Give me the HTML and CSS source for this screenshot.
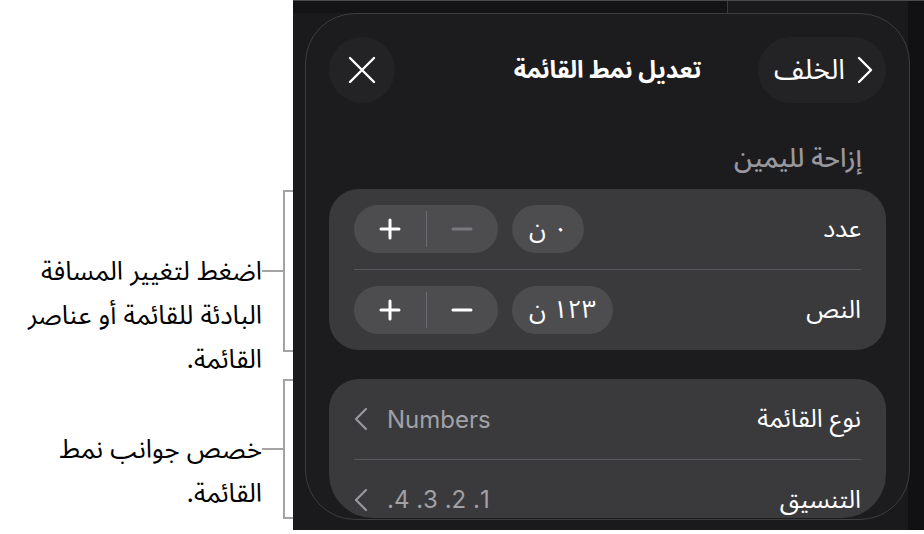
FILE: index.html
```html
<!DOCTYPE html>
<html lang="ar">
<head>
    <meta charset="UTF-8">
    <meta name="viewport" content="width=device-width, initial-scale=1.0">
    <title>تعديل نمط القائمة</title>
    <link rel="stylesheet" href="styles.css">
</head>
<body>
    <div class="page">
        <div class="notes">
            <div class="note note-indent">
                <p class="note-text" dir="rtl">اضغط لتغيير المسافة<br>البادئة للقائمة أو عناصر<br>القائمة.</p>
                <span class="note-lead"></span>
                <span class="bracket"></span>
            </div>
            <div class="note note-style">
                <p class="note-text" dir="rtl">خصص جوانب نمط<br>القائمة.</p>
                <span class="note-lead"></span>
                <span class="bracket"></span>
            </div>
        </div>

        <div class="screen">
            <div class="popover" dir="rtl">
                <div class="header">
                    <button class="back">
                        <svg width="16" height="28" viewBox="0 0 16 28"><polyline points="2,2 14,14 2,26" fill="none" stroke="#fff" stroke-width="2.4" stroke-linecap="round" stroke-linejoin="round"/></svg>
                        <span>الخلف</span>
                    </button>
                    <h1 class="title">تعديل نمط القائمة</h1>
                    <button class="close">
                        <svg width="28" height="28" viewBox="0 0 28 28"><path d="M2,2 L26,26 M26,2 L2,26" stroke="#fff" stroke-width="2.4" stroke-linecap="round"/></svg>
                    </button>
                </div>

                <h2 class="section-title">إزاحة لليمين</h2>
                <div class="group">
                    <div class="row">
                        <span class="row-label">عدد</span>
                        <div class="controls">
                            <span class="value">٠ ن</span>
                            <div class="stepper">
                                <button class="step is-disabled">
                                    <svg width="22" height="22" viewBox="0 0 22 22"><path d="M2,11 H20" stroke="currentColor" stroke-width="3" stroke-linecap="round"/></svg>
                                </button>
                                <span class="step-sep"></span>
                                <button class="step">
                                    <svg width="22" height="22" viewBox="0 0 22 22"><path d="M2,11 H20 M11,2 V20" stroke="currentColor" stroke-width="3" stroke-linecap="round"/></svg>
                                </button>
                            </div>
                        </div>
                    </div>
                    <div class="row">
                        <span class="row-label">النص</span>
                        <div class="controls">
                            <span class="value">١٢٣ ن</span>
                            <div class="stepper">
                                <button class="step">
                                    <svg width="22" height="22" viewBox="0 0 22 22"><path d="M2,11 H20" stroke="currentColor" stroke-width="3" stroke-linecap="round"/></svg>
                                </button>
                                <span class="step-sep"></span>
                                <button class="step">
                                    <svg width="22" height="22" viewBox="0 0 22 22"><path d="M2,11 H20 M11,2 V20" stroke="currentColor" stroke-width="3" stroke-linecap="round"/></svg>
                                </button>
                            </div>
                        </div>
                    </div>
                </div>

                <div class="group group-last">
                    <div class="row">
                        <span class="row-label">نوع القائمة</span>
                        <div class="link">
                            <span class="link-value" dir="ltr">Numbers</span>
                            <svg width="14" height="24" viewBox="0 0 14 24"><polyline points="12,2 2,12 12,22" fill="none" stroke="currentColor" stroke-width="2.2" stroke-linecap="round" stroke-linejoin="round"/></svg>
                        </div>
                    </div>
                    <div class="row">
                        <span class="row-label">التنسيق</span>
                        <div class="link">
                            <span class="link-value">1. 2. 3. 4.</span>
                            <svg width="14" height="24" viewBox="0 0 14 24"><polyline points="12,2 2,12 12,22" fill="none" stroke="currentColor" stroke-width="2.2" stroke-linecap="round" stroke-linejoin="round"/></svg>
                        </div>
                    </div>
                </div>
            </div>
        </div>
    </div>
</body>
</html>
```

FILE: styles.css
```css
* {
    box-sizing: border-box;
}
body {
    margin: 0;
    background-color: #fff;
    font-family: "Inter", "Noto Sans Arabic", "DejaVu Sans", sans-serif;
}
.page {
    display: flex;
    width: 924px;
    height: 534px;
}

/* callouts on the left */
.notes {
    width: 293px;
    flex-shrink: 0;
    display: flex;
    flex-direction: column;
}
.note {
    display: flex;
    justify-content: flex-end;
    align-items: flex-start;
}
.note-indent {
    margin-top: 190px;
    height: 162px;
}
.note-style {
    margin-top: 27px;
    height: 140px;
}
.note-text {
    margin: 0;
    font-size: 26px;
    line-height: 44px;
    color: #000;
    text-align: right;
    white-space: nowrap;
}
.note-indent .note-text {
    padding-top: 59px;
}
.note-style .note-text {
    padding-top: 48px;
}
.note-lead {
    align-self: center;
    width: 21px;
    height: 2px;
    background-color: #a3a3a3;
}
.bracket {
    width: 10px;
    height: 100%;
    border: 2px solid #a3a3a3;
    border-right: none;
}

/* device screen */
.screen {
    flex: 1;
    height: 530px;
    padding: 12px 14px 10px 12px;
    border-top: 1px solid #4a4a4c;
    background:
        linear-gradient(#3a3a3c, #3a3a3c) 434px 0 / 1px 12px no-repeat,
        linear-gradient(#141416, #141416) 0 0 / 434px 12px no-repeat,
        linear-gradient(to left, #111113 16px, transparent 16px),
        #1a1a1c;
}
.popover {
    height: 100%;
    padding: 23px 23px 0;
    border: 1px solid #3d3d40;
    border-radius: 50px;
    background-color: #1c1c1e;
    overflow: hidden;
    color: #fff;
}
button {
    font: inherit;
    color: inherit;
    border: none;
    padding: 0;
    cursor: pointer;
}
.header {
    display: grid;
    grid-template-columns: 1fr auto 1fr;
    align-items: center;
    height: 66px;
}
.back {
    justify-self: start;
    display: flex;
    align-items: center;
    gap: 12px;
    height: 66px;
    padding: 0 13px 0 16px;
    border-radius: 33px;
    background-color: #232325;
    font-size: 28px;
}
.title {
    margin: 0;
    font-size: 24px;
    font-weight: bold;
}
.close {
    justify-self: end;
    display: flex;
    align-items: center;
    justify-content: center;
    width: 66px;
    height: 66px;
    border-radius: 50%;
    background-color: #232325;
}
.section-title {
    margin: 41px 0 17px;
    padding: 0 24px;
    font-size: 26px;
    line-height: 28px;
    font-weight: 500;
    color: #98989e;
}

/* grouped rows */
.group {
    border-radius: 30px;
    background-color: #3a3a3c;
}
.group-last {
    margin-top: 29px;
    height: 139px;
    overflow: hidden;
    border-radius: 30px 30px 44px 44px;
}
.row {
    position: relative;
    display: flex;
    align-items: center;
    justify-content: space-between;
    height: 80px;
    padding: 0 25px;
}
.row + .row::before {
    content: "";
    position: absolute;
    top: 0;
    left: 25px;
    right: 25px;
    height: 1px;
    background-color: #58585c;
}
.row + .row {
    height: 81px;
}
.row-label {
    font-size: 25px;
}
.controls {
    display: flex;
    align-items: center;
    gap: 14px;
}
.value {
    display: flex;
    align-items: center;
    height: 48px;
    padding: 0 17px;
    border-radius: 24px;
    background-color: #4d4d50;
    font-size: 25px;
}
.stepper {
    display: flex;
    align-items: center;
    width: 144px;
    height: 48px;
    border-radius: 24px;
    background-color: #4d4d50;
}
.step {
    flex: 1;
    height: 100%;
    display: flex;
    align-items: center;
    justify-content: center;
    background: none;
    color: #fff;
}
.step.is-disabled {
    color: #7a7a7e;
}
.step-sep {
    width: 1px;
    height: 36px;
    background-color: #6c6c70;
}
.link {
    display: flex;
    align-items: center;
    gap: 19px;
    color: #98989e;
}
.link-value {
    font-size: 24px;
    color: #a1a1a6;
}
```
